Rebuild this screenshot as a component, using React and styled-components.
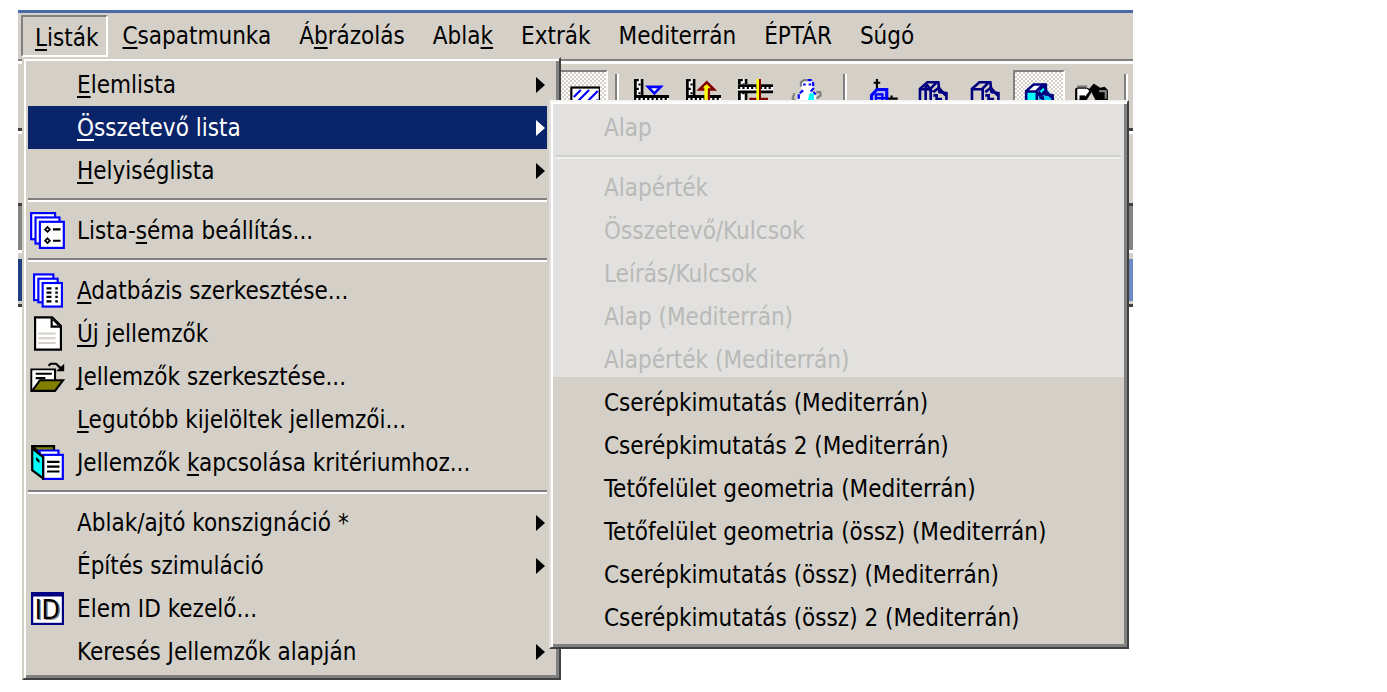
import React from "react";
import styled, { createGlobalStyle } from "styled-components";

const GlobalStyle = createGlobalStyle`
  body {
    margin: 0;
    background: #fff;
    font-family: "DejaVu Sans Condensed", "DejaVu Sans", sans-serif;
    font-size: 24px;
    color: #000;
  }
`;

const Page = styled.main`
  padding: 10px 254px 0 18px;
  min-height: 680px;
`;
const Window = styled.div`
  position: relative;
  background: #d4d0c8;
  border-top: 3px solid #4a69a8;
`;
const MenuBar = styled.nav`
  display: flex;
  height: 42px;
  padding: 2px 3px;
  border-bottom: 2px solid #808080;
`;
const BarButton = styled.button`
  height: 42px;
  padding: ${(p) => (p.$open ? "4px 8px 0 12px" : "0 12px")};
  border: 2px solid transparent;
  border-color: ${(p) => (p.$open ? "#808080 #fff #fff #808080" : "transparent")};
  background: none;
  font: inherit;
  color: inherit;
  white-space: nowrap;
`;
const Key = styled.u`
  text-decoration-thickness: 2px;
  text-underline-offset: 3px;
  text-decoration-skip-ink: none;
`;

const ToolBar = styled.div`
  display: flex;
  height: 58px;
  padding: 6px 0 0 538px;
  border-top: 3px solid #fff;
  border-bottom: 3px solid #404040;
  overflow: hidden;
`;
const ToolButton = styled.button`
  display: flex;
  flex: none;
  align-items: center;
  justify-content: center;
  width: 52px;
  height: 52px;
  padding: 0;
  border: 2px solid;
  border-color: ${(p) => (p.$pressed ? "#808080 #fff #fff #808080" : "transparent")};
  background: ${(p) =>
    p.$pressed
      ? "repeating-conic-gradient(#fff 0 25%, #d4d0c8 0 50%) 0 0 / 4px 4px"
      : "none"};
`;
const ToolGap = styled.div`
  display: flex;
  flex: none;
  justify-content: center;
  width: ${(p) => (p.$wide ? "24px" : "17px")};
  padding-top: 4px;

  &::before {
    content: "";
    width: 2px;
    height: 46px;
    border-left: 2px solid #808080;
    background: #fff;
  }
`;

const Panel = styled.div`
  height: 69px;
  border-top: 3px solid #fff;
  border-bottom: 3px solid #404040;
`;
const GreyBand = styled.div`
  height: 44px;
  background: #858585;
  border-bottom: 3px solid #fff;
`;
const TitleBand = styled.div`
  height: 42px;
  margin-top: 6px;
  background: linear-gradient(90deg, #1f3f80, #6b8bc0);
`;
const BandEdge = styled.div`
  height: 3px;
  border-bottom: 3px solid #404040;
`;

const MenuList = styled.ul`
  position: absolute;
  z-index: 1;
  box-sizing: border-box;
  margin: 0;
  list-style: none;
  background: #d4d0c8;
  border: 2px solid;
  border-color: #d4d0c8 #404040 #404040 #d4d0c8;
  box-shadow: inset 2px 2px #fff, inset -3px -3px #808080;
`;
const MainMenu = styled(MenuList)`
  top: 44px;
  left: 4px;
  width: 539px;
  padding: 4px 12px 5px 4px;
`;
const SubMenu = styled(MenuList)`
  top: -6px;
  left: 100%;
  width: 580px;
  margin-left: 2px;
  padding: 4px 6px 8px 4px;
  border-color: #f4f4f2 #404040 #404040 #e2e1df;
  background: linear-gradient(#e2e1df, #e2e1df) 0 0 / 100% 275px no-repeat #d4d0c8;
`;
const Row = styled.li`
  position: relative;
`;
const Line = styled.li`
  height: 2px;
  margin: 6px 0 7px;
  border-top: 2px solid ${(p) => (p.$pale ? "#d0d0ce" : "#808080")};
  background: ${(p) => (p.$pale ? "#f0f0ee" : "#fff")};
`;
const ItemButton = styled.button`
  display: grid;
  grid-template-columns: 39px 1fr 9px;
  column-gap: 10px;
  align-items: center;
  width: 100%;
  height: 43px;
  padding: 0 2px 0 0;
  border: 0;
  background: ${(p) => (p.$active ? "#0a246a" : "none")};
  color: ${(p) => (p.$active ? "#fff" : "#000")};
  font: inherit;
  text-align: left;
  white-space: nowrap;

  &:disabled {
    color: #b9b9b7;
  }
`;
const IconCell = styled.span`
  display: flex;
  justify-content: center;
`;

const Svg = ({ w, h, children }) => (
  <svg
    width={Math.round(w * 2.17)}
    height={Math.round(h * 2.17)}
    viewBox={`0 0 ${w} ${h}`}
    fill="none"
    aria-hidden="true"
  >
    {children}
  </svg>
);

const Arrow = () => (
  <svg width="9" height="16" viewBox="0 0 9 16" aria-hidden="true">
    <path d="M0 0L9 8L0 16Z" fill="currentColor" />
  </svg>
);

const SchemeIcon = () => (
  <Svg w={16} h={17}>
    <g fill="#fff" stroke="#00f">
      <rect x="0.5" y="0.5" width="11" height="12" />
      <rect x="2.5" y="2.5" width="11" height="12" />
      <rect x="4.5" y="4.5" width="11" height="12" />
    </g>
    <path d="M8 6.9L9.1 8L8 9.1L6.9 8ZM8 12.1L9.1 13.2L8 14.3L6.9 13.2Z" stroke="#000" strokeWidth="0.8" />
    <path d="M10.5 8H14M10.5 13.2H14" stroke="#000" />
  </Svg>
);
const DatabaseIcon = () => (
  <Svg w={14} h={16}>
    <g fill="#fff" stroke="#00f">
      <rect x="0.5" y="0.5" width="9" height="12" />
      <rect x="2.5" y="2.5" width="9" height="11" />
      <rect x="4.5" y="4.5" width="9" height="11" />
    </g>
    <path d="M6.3 7H8.6M6.3 9H8.6M6.3 11H8.6M6.3 13.1H8.6M10.4 7H11.6M10.4 9H11.6M10.4 11H11.6M10.4 13.1H11.6" stroke="#000" />
  </Svg>
);
const PageIcon = () => (
  <Svg w={13} h={16}>
    <path d="M0.5 0.5H8.5L12.5 4.5V15.5H0.5Z" fill="#fff" stroke="#000" />
    <path d="M8.2 0.5V4.8H12.5M9 1.5L11.5 4" stroke="#000" />
    <path d="M2 8H10M2 10.2H10M2 12.4H10" stroke="#d4d0c8" />
  </Svg>
);
const FolderIcon = () => (
  <Svg w={16} h={14}>
    <path d="M0.5 13.5V3.5H11.5V9" fill="#fff" stroke="#000" />
    <path d="M1 4H11V8H5L1 13Z" fill="#fff" />
    <path d="M2.5 5.5H10M2.5 7.5H7" stroke="#000" />
    <path d="M4.5 8.5H15.3L11.5 13.5H0.8Z" fill="#808000" stroke="#000" />
    <path d="M8.5 1.8L9.5 0.8H12L14.5 3.2" stroke="#000" />
    <path d="M15.8 0.8V4.3H12Z" fill="#000" />
  </Svg>
);
const BinderIcon = () => (
  <Svg w={15} h={16}>
    <path d="M0.5 0.5H10.5V3H3Z" fill="#808000" stroke="#000" />
    <path d="M3.5 2.5H12.5V6H5Z" fill="#fff" stroke="#00f" />
    <rect x="5.5" y="4.5" width="9" height="11" fill="#fff" stroke="#00f" />
    <path d="M0.5 1.5L5.5 5.5V15.3L0.5 11.5Z" fill="#0ff" stroke="#000" />
    <path d="M2.3 5.5L3.8 6.8V8.3L2.3 7Z" fill="#000" />
    <path d="M7.3 7.7H13M7.3 9.9H13M7.3 12.1H13" stroke="#000" />
  </Svg>
);
const IdIcon = () => (
  <Svg w={15} h={15}>
    <rect x="0.5" y="0.5" width="14" height="14" fill="#fff" stroke="#000080" />
    <path d="M0 1H15" stroke="#000080" strokeWidth="2" />
    <g fontSize="12" textAnchor="middle">
      <text x="8" y="12.8" fill="#808080">ID</text>
      <text x="7.4" y="12.4" fill="#000">ID</text>
    </g>
  </Svg>
);

const HatchIcon = () => (
  <Svg w={16} h={16}>
    <rect x="2.9" y="3.9" width="13" height="11" fill="#fff" stroke="#000" />
    <path d="M4 8.2L7.2 5M4 12L11 5M7 13.5L15 5.5M11 13.5L15 9.5" stroke="#00f" />
  </Svg>
);
const Ruler = ({ level }) => (
  <>
    <path d="M0 0H1.3V15H0ZM3 0H4.3V10H3Z" fill="#000" />
    <path d="M1.3 0H3V10H1.3Z" fill="#fff" />
    <path d="M1 0.5H2.2M2 2.5H3M1 4.5H2.2M2 6.5H3" stroke="#000" />
    <rect x="0" y={level} width="16" height="4" fill="#fff" />
    <path d={`M0 ${level + 0.6}H16M0 ${level + 3.5}H16`} stroke="#000" strokeWidth="1.3" />
    <path d={`M0 ${level + 1.7}H16`} stroke="#000" strokeDasharray="1 1" />
  </>
);
const RulerDownIcon = () => (
  <Svg w={16} h={16}>
    <Ruler level={7.4} />
    <path d="M6.4 3.6H12.2L9.3 6.6Z" fill="#fff" stroke="#00f" strokeWidth="1.2" />
  </Svg>
);
const RulerUpIcon = () => (
  <Svg w={16} h={16}>
    <Ruler level={7.4} />
    <path d="M6.2 4.8L9.5 1.5L12.8 4.8Z" fill="#ff0" stroke="#800000" strokeWidth="1.2" />
    <path d="M9.2 3V13" stroke="#ff0" strokeWidth="1.6" />
    <path d="M10.5 5V13" stroke="#800000" />
  </Svg>
);
const RulerCrossIcon = () => (
  <Svg w={16} h={16}>
    <Ruler level={2.4} />
    <path d="M5.2 9.1H13.7M10 0V14" stroke="#800000" />
    <path d="M9 0V14" stroke="#ff0" strokeWidth="1.2" />
  </Svg>
);
const FigureIcon = () => (
  <Svg w={16} h={16}>
    <path d="M2 6.5L1.2 9L3 10.5M12 6H13.8L14 7.5L12 9" stroke="#808080" />
    <path d="M5 1.5L6.5 0.3H9.5L11 2V4.5L10 5.5L12 7.5V12H3.5V7.5L6 5.5L5 4.5Z" fill="#fff" />
    <path d="M5 3.5V1.5L6.5 0.5H8" stroke="#808080" />
    <path d="M8 0.5H9.5L10.6 2V4.5L9.8 5.4L11.8 7M6 5.2L4 7V10" stroke="#00f" strokeDasharray="2 0.7" />
    <path d="M6 2.5H7.2M8.5 2.5H9.7" stroke="#00f" />
    <path d="M9 6.5H11V10H8Z" fill="#0ff" />
  </Svg>
);
const AxisHouseIcon = () => (
  <Svg w={16} h={16}>
    <path d="M5 0V5M3.5 1.7H6.5M11.7 7.5V9M10 9H14.5" stroke="#000" />
    <path d="M2.5 10V7.5L5 4.8H9.5V10" fill="#b0b8f0" stroke="#00f" strokeWidth="1.4" />
    <path d="M4.5 10V7H7.5V10M5 8.7H9" stroke="#00f" />
  </Svg>
);
const HouseLines = () => (
  <>
    <path d="M0.9 10V4.5L4.3 1.5H9.3L9.8 6L13 6.5V10" />
    <path d="M1 4.7H5.5L8.3 1.8M5.8 4.7V10M7 6L9.5 4L12.6 7.5M7 7.5H8.5V9.2H11" />
  </>
);
const WireHouseIcon = () => (
  <Svg w={16} h={16}>
    <g stroke="#000080" strokeWidth="1.2">
      <HouseLines />
      <path d="M3.5 3V10M4 2.5L6.5 6" />
    </g>
  </Svg>
);
const PlainHouseIcon = () => (
  <Svg w={16} h={16}>
    <g stroke="#000080" strokeWidth="1.2">
      <HouseLines />
    </g>
  </Svg>
);
const ShadedHouseIcon = () => (
  <Svg w={16} h={16}>
    <g transform="translate(1 1)">
      <path d="M1 4.5H6V12H1Z" fill="#0ff" />
      <path d="M1 4.5L4.3 1.5H8.5L5.5 4.5Z" fill="#fff" />
      <path d="M6 6L9.5 2.5L13 7V12H8Z" fill="#0cf" />
      <path d="M8.5 1H10.5V5.5L7 7.5L6 6Z" fill="#000080" />
      <g stroke="#000080" strokeWidth="1.2">
        <HouseLines />
      </g>
      <path d="M7.5 5L9 3.5" stroke="#0ff" />
    </g>
  </Svg>
);
const CameraIcon = () => (
  <Svg w={16} h={16}>
    <path d="M0.5 10V4.5L2 3.5H5L7 4.5L9 2L12 4L14 3.5L15.5 5V10Z" fill="#000" />
    <path d="M1.5 4.5H6L7 5.5L4 9.5H1.5Z" fill="#fff" />
    <path d="M2.5 7.5H5V10H2.5Z" fill="#000" />
    <path d="M5.5 10L8 6L10 10" fill="#d4d0c8" />
    <path d="M11.5 5.5H14.5V9" stroke="#808080" />
    <path d="M1.5 3.4H6" stroke="#808080" />
  </Svg>
);

// "&" marks the access key of a label, as in a resource file
const Label = ({ text }) => {
  const at = text.indexOf("&");
  if (at < 0) return <span>{text}</span>;
  return (
    <span>
      {text.slice(0, at)}
      <Key>{text[at + 1]}</Key>
      {text.slice(at + 2)}
    </span>
  );
};

const bar = ["&Listák", "&Csapatmunka", "Á&brázolás", "Abla&k", "Extrák", "Mediterrán", "ÉPTÁR", "Súgó"];

const tools = [
  { name: "Kitöltés", icon: HatchIcon, pressed: true },
  {},
  { name: "Szint le", icon: RulerDownIcon },
  { name: "Szint fel", icon: RulerUpIcon },
  { name: "Metszet", icon: RulerCrossIcon },
  { name: "Figura", icon: FigureIcon },
  { wide: true },
  { name: "Axonometria", icon: AxisHouseIcon },
  { name: "Drótváz", icon: WireHouseIcon },
  { name: "Takart vonalas", icon: PlainHouseIcon },
  { name: "Árnyékolt", icon: ShadedHouseIcon, pressed: true },
  { name: "Kamera", icon: CameraIcon },
  {},
];

const subItems = [
  { text: "Alap", disabled: true },
  { line: true, pale: true },
  { text: "Alapérték", disabled: true },
  { text: "Összetevő/Kulcsok", disabled: true },
  { text: "Leírás/Kulcsok", disabled: true },
  { text: "Alap (Mediterrán)", disabled: true },
  { text: "Alapérték (Mediterrán)", disabled: true },
  { text: "Cserépkimutatás (Mediterrán)" },
  { text: "Cserépkimutatás 2 (Mediterrán)" },
  { text: "Tetőfelület geometria (Mediterrán)" },
  { text: "Tetőfelület geometria (össz) (Mediterrán)" },
  { text: "Cserépkimutatás (össz) (Mediterrán)" },
  { text: "Cserépkimutatás (össz) 2 (Mediterrán)" },
];

const mainItems = [
  { text: "&Elemlista", more: true },
  { text: "&Összetevő lista", more: true, items: subItems },
  { text: "&Helyiséglista", more: true },
  { line: true },
  { text: "Lista-&séma beállítás...", icon: SchemeIcon },
  { line: true },
  { text: "&Adatbázis szerkesztése...", icon: DatabaseIcon },
  { text: "&Új jellemzők", icon: PageIcon },
  { text: "&Jellemzők szerkesztése...", icon: FolderIcon },
  { text: "&Legutóbb kijelöltek jellemzői..." },
  { text: "Jellemzők &kapcsolása kritériumhoz...", icon: BinderIcon },
  { line: true },
  { text: "Ablak/ajtó konszignáció *", more: true },
  { text: "Építés szimuláció", more: true },
  { text: "Elem ID kezelő...", icon: IdIcon },
  { text: "Keresés Jellemzők alapján", more: true },
];

const Items = ({ items }) =>
  items.map((item, i) => {
    if (item.line) return <Line key={i} $pale={item.pale} />;
    const Icon = item.icon;
    return (
      <Row key={i}>
        <ItemButton $active={!!item.items} disabled={item.disabled}>
          <IconCell>{Icon && <Icon />}</IconCell>
          <Label text={item.text} />
          {item.more && <Arrow />}
        </ItemButton>
        {item.items && (
          <SubMenu>
            <Items items={item.items} />
          </SubMenu>
        )}
      </Row>
    );
  });

const App = () => {
  return (
    <Page>
      <GlobalStyle />
      <Window>
        <MenuBar>
          {bar.map((text, i) => (
            <BarButton key={text} $open={i === 0}>
              <Label text={text} />
            </BarButton>
          ))}
        </MenuBar>
        <ToolBar>
          {tools.map(({ name, icon: Icon, pressed, wide }, i) =>
            Icon ? (
              <ToolButton key={i} $pressed={pressed} aria-label={name}>
                <Icon />
              </ToolButton>
            ) : (
              <ToolGap key={i} $wide={wide} />
            )
          )}
        </ToolBar>
        <Panel />
        <GreyBand />
        <TitleBand />
        <BandEdge />
        <MainMenu>
          <Items items={mainItems} />
        </MainMenu>
      </Window>
    </Page>
  );
};

export default App;
